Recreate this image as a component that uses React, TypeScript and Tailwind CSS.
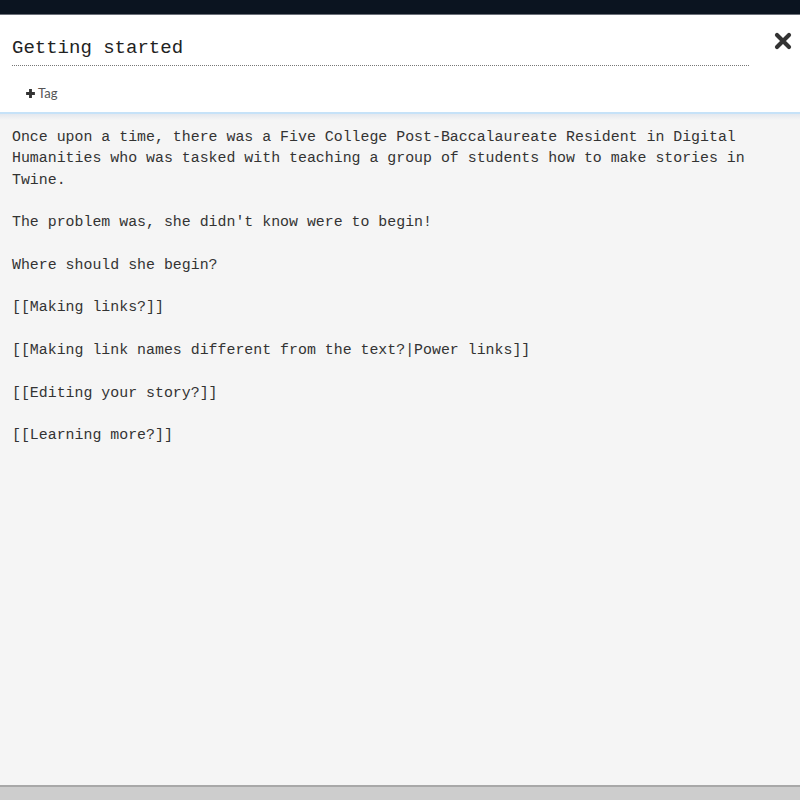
const body = [
  "Once upon a time, there was a Five College Post-Baccalaureate Resident in Digital Humanities who was tasked with teaching a group of students how to make stories in Twine.",
  "",
  "The problem was, she didn't know were to begin!",
  "",
  "Where should she begin?",
  "",
  "[[Making links?]]",
  "",
  "[[Making link names different from the text?|Power links]]",
  "",
  "[[Editing your story?]]",
  "",
  "[[Learning more?]]",
];

export default function App() {
  return (
    <div className="w-[800px] h-[800px] flex flex-col bg-[#f5f5f5] overflow-hidden">
      {/* top chrome */}
      <div className="h-[15px] bg-[#0b1420] border-b border-[#6b6f78] shrink-0" />

      {/* passage header */}
      <div className="relative bg-white shrink-0 h-[99px] border-b-2 border-[#c6e2f8]">
        <div className="px-3 pt-[21px]">
          <div
            className="text-[19px] leading-[24px] text-[#222] w-[737px] pb-[5px] border-b border-dotted border-[#777]"
            style={{ fontFamily: "'Liberation Mono', 'DejaVu Sans Mono', monospace" }}
          >
            Getting started
          </div>
        </div>
        <button className="flex items-center gap-[2px] ml-[25px] mt-[18px] text-[13px] text-[#555]"
          style={{ fontFamily: "Lato, 'Open Sans', sans-serif" }}>
          <svg width="11" height="11" viewBox="0 0 10 10">
            <path d="M5 1v8M1 5h8" stroke="#333" strokeWidth="2.6" />
          </svg>
          Tag
        </button>
        <button className="absolute right-[8px] top-[17px]">
          <svg width="18" height="18" viewBox="0 0 18 18">
            <path d="M3 3l12 12M15 3L3 15" stroke="#333" strokeWidth="4.2" strokeLinecap="round" />
          </svg>
        </button>
      </div>
      <div className="h-[6px] bg-gradient-to-b from-[#e4e8ee] to-[#f5f5f5] shrink-0" />

      {/* passage text */}
      <div
        className="flex-1 px-3 pt-[7px] text-[14.9px] leading-[21.3px] text-[#333] whitespace-pre-wrap"
        style={{ fontFamily: "'Liberation Mono', 'DejaVu Sans Mono', monospace" }}
      >
        {body.map((line, i) => (
          <div key={i} className="min-h-[21.3px] w-[750px]">
            {line}
          </div>
        ))}
      </div>

      {/* bottom edge */}
      <div className="h-[15px] shrink-0 bg-[#cdcdcd] border-t-2 border-[#a8a8a8]" />
    </div>
  );
}
